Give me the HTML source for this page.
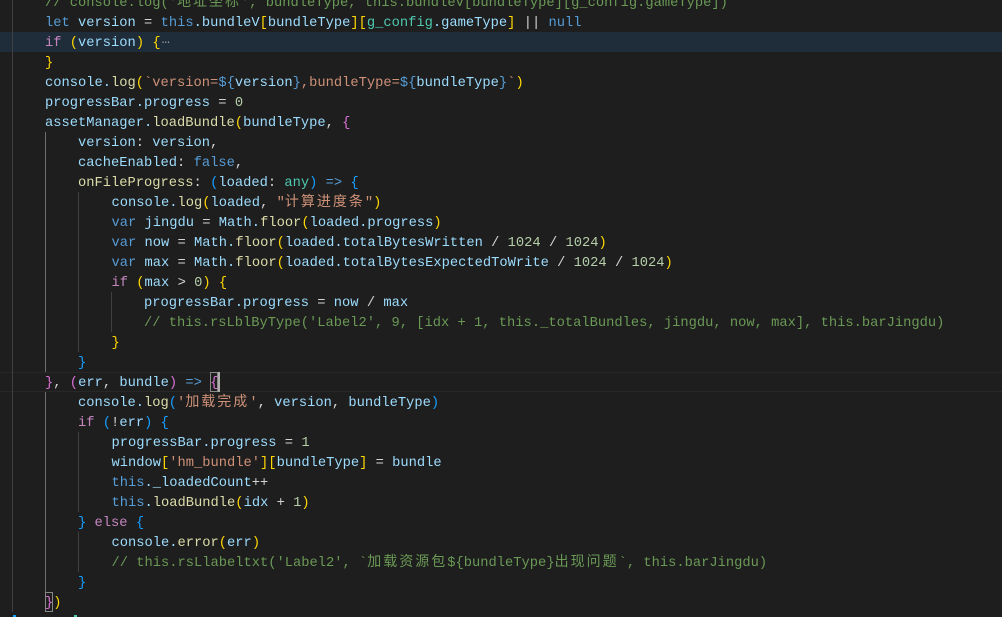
<!DOCTYPE html>
<html><head><meta charset="utf-8"><style>
html,body{margin:0;padding:0;background:#1e1e1e;}
#e{position:relative;width:1002px;height:617px;overflow:hidden;background:#1e1e1e;font-family:"Liberation Mono","Noto Sans CJK SC",monospace;font-size:13.75px;color:#9cdcfe;}
.l{position:absolute;height:24px;line-height:24px;white-space:pre;}
.g{position:absolute;width:1px;}
.k{color:#569cd6}.p{color:#c586c0}.f{color:#dcdcaa}.s{color:#ce9178}.c{color:#6a9955}.n{color:#b5cea8}.o{color:#d4d4d4}.t{color:#4ec9b0}
.y{color:#ffd700}.m{color:#da70d6}.b{color:#179fff}
i{font-style:normal;font-family:"Noto Sans CJK SC",sans-serif;font-size:14px;letter-spacing:2px;line-height:1;}
</style></head><body><div id="e">
<div style="position:absolute;left:0;top:32px;width:1002px;height:20px;background:#1f2c3a"></div>
<div style="position:absolute;left:0;top:372px;width:1002px;height:18px;border-top:1px solid #282828;border-bottom:1px solid #282828"></div>
<div class="g" style="left:12px;top:0;height:612px;background:#404040"></div>
<div class="g" style="left:45px;top:132px;height:240px;background:#6e6e6e"></div>
<div class="g" style="left:45px;top:392px;height:200px;background:#6e6e6e"></div>
<div class="g" style="left:78px;top:192px;height:160px;background:#404040"></div>
<div class="g" style="left:78px;top:432px;height:80px;background:#404040"></div>
<div class="g" style="left:78px;top:532px;height:40px;background:#404040"></div>
<div class="g" style="left:111px;top:292px;height:40px;background:#404040"></div>
<div style="position:absolute;left:210px;top:372px;width:6px;height:18px;border:1px solid #888"></div>
<div style="position:absolute;left:218px;top:372px;width:2px;height:20px;background:#aeafad"></div>
<div style="position:absolute;left:45px;top:592px;width:6px;height:18px;border:1px solid #888"></div>

<div class="l c" style="left:45px;top:-8px">// console.log('<i>地址坐标</i>', bundleType, this.bundleV[bundleType][g_config.gameType])</div>
<div class="l" style="left:45px;top:12px"><span class="k">let</span> version <span class="o">=</span> <span class="k">this</span>.bundleV<span class="y">[</span>bundleType<span class="y">][</span><span class="t">g_config</span>.gameType<span class="y">]</span> <span class="o">||</span> <span class="k">null</span></div>
<div class="l" style="left:45px;top:32px"><span class="p">if</span> <span class="y">(</span>version<span class="y">)</span> <span class="y">{</span><span style="color:#a0a0a0;position:relative;top:-3px;left:1px">…</span></div>
<div class="l y" style="left:45px;top:52px">}</div>
<div class="l" style="left:45px;top:72px">console.<span class="f">log</span><span class="y">(</span><span class="s">`version=</span><span class="k">${</span>version<span class="k">}</span><span class="s">,bundleType=</span><span class="k">${</span>bundleType<span class="k">}</span><span class="s">`</span><span class="y">)</span></div>
<div class="l" style="left:45px;top:92px">progressBar.progress <span class="o">=</span> <span class="n">0</span></div>
<div class="l" style="left:45px;top:112px">assetManager.<span class="f">loadBundle</span><span class="y">(</span>bundleType<span class="o">,</span> <span class="m">{</span></div>
<div class="l" style="left:78px;top:132px">version<span class="o">:</span> version<span class="o">,</span></div>
<div class="l" style="left:78px;top:152px">cacheEnabled<span class="o">:</span> <span class="k">false</span><span class="o">,</span></div>
<div class="l" style="left:78px;top:172px"><span class="f">onFileProgress</span><span class="o">:</span> <span class="b">(</span>loaded<span class="o">:</span> <span class="t">any</span><span class="b">)</span> <span class="k">=&gt;</span> <span class="b">{</span></div>
<div class="l" style="left:111.5px;top:192px">console.<span class="f">log</span><span class="y">(</span>loaded<span class="o">,</span> <span class="s">"<i>计算进度条</i>"</span><span class="y">)</span></div>
<div class="l" style="left:111.5px;top:212px"><span class="k">var</span> jingdu <span class="o">=</span> Math.<span class="f">floor</span><span class="y">(</span>loaded.progress<span class="y">)</span></div>
<div class="l" style="left:111.5px;top:232px"><span class="k">var</span> now <span class="o">=</span> Math.<span class="f">floor</span><span class="y">(</span>loaded.totalBytesWritten <span class="o">/</span> <span class="n">1024</span> <span class="o">/</span> <span class="n">1024</span><span class="y">)</span></div>
<div class="l" style="left:111.5px;top:252px"><span class="k">var</span> max <span class="o">=</span> Math.<span class="f">floor</span><span class="y">(</span>loaded.totalBytesExpectedToWrite <span class="o">/</span> <span class="n">1024</span> <span class="o">/</span> <span class="n">1024</span><span class="y">)</span></div>
<div class="l" style="left:111.5px;top:272px"><span class="p">if</span> <span class="y">(</span>max <span class="o">&gt;</span> <span class="n">0</span><span class="y">)</span> <span class="y">{</span></div>
<div class="l" style="left:144px;top:292px">progressBar.progress <span class="o">=</span> now <span class="o">/</span> max</div>
<div class="l c" style="left:144px;top:312px">// this.rsLblByType('Label2', 9, [idx + 1, this._totalBundles, jingdu, now, max], this.barJingdu)</div>
<div class="l y" style="left:111.5px;top:332px">}</div>
<div class="l b" style="left:78px;top:352px">}</div>
<div class="l" style="left:45px;top:372px"><span class="m">}</span><span class="o">,</span> <span class="m">(</span>err<span class="o">,</span> bundle<span class="m">)</span> <span class="k">=&gt;</span> <span class="m">{</span></div>
<div class="l" style="left:78px;top:392px">console.<span class="f">log</span><span class="b">(</span><span class="s">'<i>加载完成</i>'</span><span class="o">,</span> version<span class="o">,</span> bundleType<span class="b">)</span></div>
<div class="l" style="left:78px;top:412px"><span class="p">if</span> <span class="b">(</span><span class="o">!</span>err<span class="b">)</span> <span class="b">{</span></div>
<div class="l" style="left:111.5px;top:432px">progressBar.progress <span class="o">=</span> <span class="n">1</span></div>
<div class="l" style="left:111.5px;top:452px">window<span class="y">[</span><span class="s">'hm_bundle'</span><span class="y">][</span>bundleType<span class="y">]</span> <span class="o">=</span> bundle</div>
<div class="l" style="left:111.5px;top:472px"><span class="k">this</span>._loadedCount<span class="o">++</span></div>
<div class="l" style="left:111.5px;top:492px"><span class="k">this</span>.<span class="f">loadBundle</span><span class="y">(</span>idx <span class="o">+</span> <span class="n">1</span><span class="y">)</span></div>
<div class="l" style="left:78px;top:512px"><span class="b">}</span> <span class="p">else</span> <span class="b">{</span></div>
<div class="l" style="left:111.5px;top:532px">console.<span class="f">error</span><span class="y">(</span>err<span class="y">)</span></div>
<div class="l c" style="left:111.5px;top:552px">// this.rsLlabeltxt('Label2', `<i>加载资源包</i>${bundleType}<i>出现问题</i>`, this.barJingdu)</div>
<div class="l b" style="left:78px;top:572px">}</div>
<div class="l" style="left:45px;top:592px"><span class="m">}</span><span class="y">)</span></div>
<div style="position:absolute;left:13px;top:615px;width:3px;height:2px;background:#179fff"></div>
<div style="position:absolute;left:74px;top:615px;width:3px;height:2px;background:#4ec9b0"></div>
</div></body></html>
